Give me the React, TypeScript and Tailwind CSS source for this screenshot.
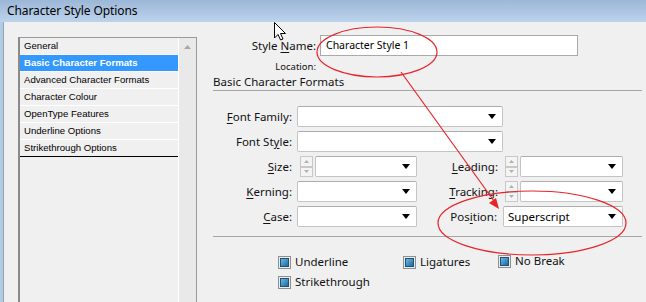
import React from 'react';

const ui = { fontFamily: '"Noto Sans", "Open Sans", sans-serif' };
const listFont = { fontFamily: '"Liberation Sans", Arial, sans-serif' };

function Mn({ before, m, after }: { before?: string; m: string; after?: string }) {
  return (
    <span>
      {before}
      <span className="underline underline-offset-2">{m}</span>
      {after}
    </span>
  );
}

function Combo({ w, value }: { w: string; value?: string }) {
  return (
    <div
      className={`${w} h-[21px] bg-white border border-[#c4c4c4] border-t-[#adadad] rounded-[2px] flex items-center justify-between pl-[4px] pr-[6px]`}
    >
      <span className="text-[11.5px] text-black">{value}</span>
      <svg width="8" height="5" viewBox="0 0 8 5">
        <path d="M0 0 L8 0 L4 5 Z" fill="#000" />
      </svg>
    </div>
  );
}

function Spinner() {
  return (
    <div className="w-[13px] h-[21px] flex flex-col">
      {[0, 1].map((i) => (
        <div
          key={i}
          className="flex-1 border border-[#c8c8c8] bg-[#f4f4f4] flex items-center justify-center"
        >
          <svg width="5" height="3" viewBox="0 0 5 3">
            <path d={i === 0 ? 'M0 3 L5 3 L2.5 0 Z' : 'M0 0 L5 0 L2.5 3 Z'} fill="#b0b0b0" />
          </svg>
        </div>
      ))}
    </div>
  );
}

function Check({ label }: { label: string }) {
  return (
    <div className="flex items-center gap-[4px] leading-[14px]">
      <div className="w-[13px] h-[13px] border border-[#8f8f8f] bg-[#e6eef3] p-[1px]">
        <div className="w-full h-full border border-[#23506f] bg-gradient-to-br from-[#6ab8e6] to-[#1a6ba3]" />
      </div>
      <span className="text-[11.5px] text-[#111]">{label}</span>
    </div>
  );
}

const items = [
  'General',
  'Basic Character Formats',
  'Advanced Character Formats',
  'Character Colour',
  'OpenType Features',
  'Underline Options',
  'Strikethrough Options',
];

export default function App() {
  return (
    <div className="relative w-[646px] h-[302px] overflow-hidden bg-[#f0f0f0]" style={ui}>
      <div className="h-[22px] bg-gradient-to-b from-[#9cb7d7] to-[#bdd3ec] flex items-center pl-[7px] text-[12px] tracking-[-0.1px] text-black">
        Character Style Options
      </div>

      <div className="flex h-[280px] border-l-[3px] border-[#b4cbe4]">
        <div className="w-[15px] border-l border-[#8ea2bb]" />

        {/* category list */}
        <div className="mt-[15px] w-[179px] h-[300px] border border-[#9a9a9a] border-l-[2px] border-l-[#8a8a8a] flex" style={listFont}>
          <div className="w-[159px] border-r border-white">
            {items.map((it, i) => (
              <div
                key={it}
                className={`h-[17px] flex items-center pl-[4px] text-[9.6px] border-b border-white ${
                  i === 1 ? 'bg-[#3399ff] text-white font-bold' : 'text-black'
                } ${i === items.length - 1 ? 'border-b-black' : ''}`}
              >
                {it}
              </div>
            ))}
          </div>
          <div className="flex-1 bg-[#e9e9e9] flex justify-center pt-[7px]">
            <svg width="7" height="4" viewBox="0 0 7 4">
              <path d="M0 4 L7 4 L3.5 0 Z" fill="#a8a8a8" />
            </svg>
          </div>
        </div>

        {/* settings */}
        <div className="ml-[16px] flex-1 pr-[4px] text-[11.5px] text-[#111]">
          <div className="mt-[13px] flex items-center">
            <div className="w-[107px] text-right pr-[4px]">
              Style <Mn m="N" after="ame:" />
            </div>
            <div className="w-[258px] h-[21px] bg-white border border-[#a9a9a9] flex items-center pl-[5px] text-[10.5px] text-black">
              Character Style 1
            </div>
          </div>
          <div className="w-[103px] text-right text-[9.5px] leading-[12px] mt-[5px]">Location:</div>
          <div className="mt-[1px] border-b border-[#a6a6a6] leading-[16px]">Basic Character Formats</div>

          <div className="mt-[15px] flex flex-col gap-[4px]">
            <div className="flex items-center">
              <div className="w-[84px] text-right pr-[5px]"><Mn m="F" after="ont Family:" /></div>
              <Combo w="w-[206px]" />
            </div>
            <div className="flex items-center">
              <div className="w-[84px] text-right pr-[5px]"><Mn before="Font St" m="y" after="le:" /></div>
              <Combo w="w-[206px]" />
            </div>
            <div className="flex items-center">
              <div className="w-[84px] text-right pr-[5px]"><Mn m="S" after="ize:" /></div>
              <div className="ml-[3px]"><Spinner /></div>
              <div className="ml-[2px]"><Combo w="w-[102px]" /></div>
              <div className="w-[88px] text-right pr-[7px]"><Mn m="L" after="eading:" /></div>
              <Spinner />
              <div className="ml-[2px]"><Combo w="w-[103px]" /></div>
            </div>
            <div className="flex items-center">
              <div className="w-[84px] text-right pr-[5px]"><Mn m="K" after="erning:" /></div>
              <Combo w="w-[120px]" />
              <div className="w-[88px] text-right pr-[7px]"><Mn m="T" after="racking:" /></div>
              <Spinner />
              <div className="ml-[2px]"><Combo w="w-[103px]" /></div>
            </div>
            <div className="flex items-center">
              <div className="w-[84px] text-right pr-[5px]"><Mn m="C" after="ase:" /></div>
              <Combo w="w-[120px]" />
              <div className="w-[86px] text-right pr-[6px]"><Mn before="Pos" m="i" after="tion:" /></div>
              <Combo w="w-[120px]" value="Superscript" />
            </div>
          </div>

          <div className="mt-[9px] border-t border-[#a6a6a6]" />

          <div className="mt-[18px] pl-[65px] flex flex-col gap-[6px]">
            <div className="flex items-start">
              <div className="w-[125px]"><Check label="Underline" /></div>
              <div className="w-[95px]"><Check label="Ligatures" /></div>
              <div className="-mt-[1px]"><Check label="No Break" /></div>
            </div>
            <Check label="Strikethrough" />
          </div>
        </div>
      </div>

      {/* annotations */}
      <svg className="absolute inset-0 pointer-events-none" width="646" height="302" viewBox="0 0 646 302">
        <ellipse cx="377" cy="52" rx="60" ry="25" fill="none" stroke="#e8242a" strokeWidth="1.2" />
        <ellipse cx="532" cy="223" rx="94" ry="32" fill="none" stroke="#e8242a" strokeWidth="1.2" />
        <line x1="401" y1="72" x2="494" y2="201" stroke="#e8242a" strokeWidth="1.2" />
        <path d="M499 209 L489 203 L496 198 Z" fill="#e8242a" />
        <path
          d="M274.5 22.5 L274.5 38 L278 34.5 L280.6 40 L283 39 L280.5 33.5 L285.5 33.5 Z"
          fill="#fff"
          stroke="#000"
          strokeWidth="1"
        />
      </svg>
    </div>
  );
}
